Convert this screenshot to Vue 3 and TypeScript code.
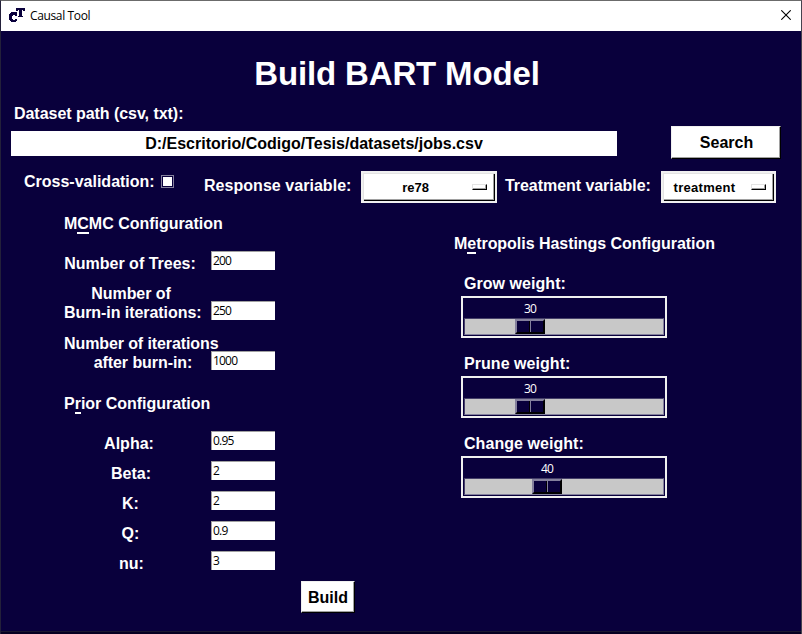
<script setup lang="ts">
import { reactive, ref } from 'vue'

interface Field { lines: string[]; value: string; width: number; height: number; cls: string }
interface Scale { label: string; value: number }

const path = ref('D:/Escritorio/Codigo/Tesis/datasets/jobs.csv')
const crossValidation = ref(false)

const mcmc = reactive<Field[]>([
  { lines: ['Number of Trees:'], value: '200', width: 132, height: 50, cls: 'single' },
  { lines: ['Number of', 'Burn-in iterations:'], value: '250', width: 137, height: 50, cls: 'center tight burn' },
  { lines: ['Number of iterations', 'after burn-in:'], value: '1000', width: 154, height: 50, cls: 'center tight last' },
])
const prior = reactive<Field[]>([
  { lines: ['Alpha:'], value: '0.95', width: 130, height: 30, cls: 'single' },
  { lines: ['Beta:'], value: '2', width: 134, height: 30, cls: 'single' },
  { lines: ['K:'], value: '2', width: 133, height: 30, cls: 'single' },
  { lines: ['Q:'], value: '0.9', width: 133, height: 30, cls: 'single' },
  { lines: ['nu:'], value: '3', width: 135, height: 30, cls: 'single' },
])
const scales = reactive<Scale[]>([
  { label: 'Grow weight:', value: 30 },
  { label: 'Prune weight:', value: 30 },
  { label: 'Change weight:', value: 40 },
])

// The slider is 30px wide and travels along the 168px left in the trough.
const offset = (value: number) => `${Math.round(value * 1.68)}px`
</script>

<template>
  <div class="window">
    <header class="titlebar">
      <svg class="logo" width="16" height="16" viewBox="0 0 16 16" shape-rendering="crispEdges">
        <path d="M2 5h6v4H6V8H4v1H3v3h1v1h2v-1h2v2H7v1H2v-1H1v-1H0V7h1V6h1z" fill="#09003c" />
        <path d="M7 1h9v3h-2V3h-1v6h1v1H9V9h1V3H9v1H7z" fill="#09003c" />
      </svg>
      <span class="caption">Causal Tool</span>
      <svg class="close" width="10" height="10" viewBox="0 0 10 10">
        <path d="M.3.3l9.4 9.4M9.7.3L.3 9.7" stroke="#000" stroke-width="1.1" />
      </svg>
    </header>

    <main class="content">
      <h1>Build BART Model</h1>
      <label class="path-label">Dataset path (csv, txt):</label>
      <div class="path-row">
        <input v-model="path" class="path" type="text" />
        <button class="raised search">Search</button>
      </div>

      <div class="options">
        <label class="cross">Cross-validation:</label>
        <button class="check" aria-label="Cross-validation" @click="crossValidation = !crossValidation"></button>
        <label class="response">Response variable:</label>
        <button class="menu menu-response"><span>re78</span><i></i></button>
        <label class="treatment">Treatment variable:</label>
        <button class="menu menu-treatment"><span>treatment</span><i></i></button>
      </div>

      <div class="columns">
        <section class="left">
          <h2>M<span class="mark">C</span>MC Configuration</h2>
          <div class="mcmc">
            <div v-for="f in mcmc" :key="f.lines[0]" class="field" :class="f.cls" :style="{ height: f.height + 'px' }">
              <div class="label-slot">
                <label :style="{ width: f.width + 'px' }"><span v-for="l in f.lines" :key="l">{{ l }}</span></label>
              </div>
              <input v-model="f.value" class="entry" type="text" />
            </div>
          </div>
          <h2 class="prior-title">P<span class="mark">r</span>ior Configuration</h2>
          <div class="prior">
            <div v-for="f in prior" :key="f.lines[0]" class="field single" :style="{ height: f.height + 'px' }">
              <div class="label-slot">
                <label :style="{ width: f.width + 'px' }"><span v-for="l in f.lines" :key="l">{{ l }}</span></label>
              </div>
              <input v-model="f.value" class="entry" type="text" />
            </div>
          </div>
          <button class="raised build">Build</button>
        </section>

        <section class="right">
          <h2>M<span class="mark">e</span>tropolis Hastings Configuration</h2>
          <div v-for="s in scales" :key="s.label" class="scale-group">
            <label>{{ s.label }}</label>
            <div class="scale">
              <div class="value" :style="{ marginLeft: offset(s.value) }">{{ s.value }}</div>
              <div class="trough">
                <div class="slider" :style="{ marginLeft: offset(s.value) }"><i></i><i></i></div>
              </div>
            </div>
          </div>
        </section>
      </div>
    </main>
    <footer class="edge"></footer>
  </div>
</template>

<style>
body { margin: 0; background: #09003c; }
</style>

<style scoped>
* { box-sizing: border-box; }
.window {
  width: 802px; height: 634px; display: flex; flex-direction: column; overflow: hidden;
  background: #09003c; color: #fff; border-top: 1px solid #6b6b6b;
  border-left: 1px solid #23203a; border-right: 1px solid #45434f;
  font: bold 16px/18px "Liberation Sans", Arial, sans-serif;
}
.titlebar { height: 30px; flex: none; display: flex; align-items: center; background: #fff; padding: 0 10px 0 8px; }
.logo { margin-bottom: 2px; }
.caption { margin-left: 5px; flex: 1; color: #000; font: 12px/16px "Open Sans", sans-serif; letter-spacing: -.36px; }
.close { margin-bottom: 2px; }
.content { flex: 1; min-height: 0; }
h1 { margin: 24px 0 0; height: 38px; font-size: 33px; line-height: 38px; letter-spacing: -.15px; text-align: center; padding-right: 8px; white-space: nowrap; }
label { display: block; white-space: nowrap; }
label span { display: block; line-height: 19px; }
input, button { font: inherit; border-radius: 0; appearance: none; display: block; flex: none; margin: 0; padding: 0; outline: none; }
.path-label { margin: 12px 0 0 13px; letter-spacing: -.04px; }
.path-row { display: flex; align-items: flex-start; margin-top: 3px; padding-left: 10px; }
.path { width: 606px; height: 25px; margin-top: 5px; border: 0; background: #fff; color: #000; text-align: center; }
.raised { background: #fff; color: #000; border: 1px solid; border-color: #f0f0f0 #000 #000 #f0f0f0; box-shadow: inset -1px -1px #a0a0a0; }
.search { width: 110px; height: 33px; margin-left: 54px; padding-left: 1px; }
.options { display: flex; align-items: flex-start; height: 44px; margin-top: 12px; padding-left: 23px; }
.cross { width: 137px; margin-top: 2px; }
.check { width: 13px; height: 13px; margin-top: 4px; background: #fff; border: 1px solid #84809d; box-shadow: inset 0 0 0 1px #09003c; }
.response { margin: 6px 0 0 30px; width: 157px; letter-spacing: .04px; }
.treatment { margin: 6px 0 0 8px; width: 156px; letter-spacing: -.05px; }
.menu {
  height: 32px; display: flex; align-items: center; background: #fff; color: #000;
  border: 2px solid #f0f0f0; font-size: 13px; line-height: 16px;
  box-shadow: inset 1px 1px #e3e3e3, inset -1px -1px #000, inset -2px -2px #a0a0a0;
}
.menu span { flex: 1; text-align: center; padding-top: 1px; }
.menu i { width: 15px; height: 6px; margin-right: 8px; border: 1px solid; border-color: #e3e3e3 #000 #000 #e3e3e3; box-shadow: inset -1px -1px #a0a0a0; }
.menu-response { width: 136px; }
.menu-treatment { width: 115px; }
.menu-response span { padding-right: 4px; }
.menu-treatment span { padding-right: 5px; letter-spacing: .3px; }
.columns { display: flex; align-items: flex-start; }
.left { width: 390px; padding-left: 63px; flex: none; }
.right { padding: 20px 0 0 63px; }
h2 { margin: 0; height: 22px; font-size: 16px; line-height: 18px; white-space: nowrap; letter-spacing: -.02px; }
.mark { display: inline-block; height: 19px; border-bottom: 2px solid #fff; vertical-align: top; }
.mcmc { margin-top: 14px; }
.field { display: flex; align-items: flex-start; }
.label-slot { width: 147px; flex: none; }
.label-slot label { text-align: center; }
.tight label { letter-spacing: -.06px; }
.burn label span:first-child { padding-right: 3px; }
.last label span:first-child { letter-spacing: -.1px; }
.last label span:last-child { padding-left: 4px; }
.single .label-slot { padding-top: 3px; }
.center .label-slot { margin-top: -17px; }
.entry {
  width: 64px; height: 19px; padding: 0 0 1px 1px; border: 0 solid #a0a0a0; border-width: 1px 0 0 1px;
  background: #fff; color: #000; font: 12px/16px "Open Sans", sans-serif; letter-spacing: -.8px;
}
.prior-title { margin-top: -6px; }
.prior { margin-top: 14px; }
.build { width: 54px; height: 32px; margin-left: 237px; padding-top: 1px; }
.scale-group { height: 80px; padding-left: 7px; }
.right h2 { margin-bottom: 18px; letter-spacing: -.04px; }
.right .scale-group label { padding-left: 3px; letter-spacing: .05px; }
.scale { width: 206px; height: 42px; margin-top: 3px; border: 2px solid #f0f0f0; padding: 0 1px; }
.value { width: 32px; height: 20px; font: 12px/22px "Open Sans", sans-serif; letter-spacing: -.8px; text-align: center; }
.trough { width: 200px; height: 17px; background: #c8c8c8; border: 1px solid; border-color: #453f69 #84809d #84809d #453f69; }
.slider { width: 30px; height: 15px; display: flex; background: #09003c; border: 2px solid; border-color: #84809d #000 #000 #84809d; }
.slider i { flex: 1; }
.slider i:first-child { border-right: 1px solid #000; }
.slider i:last-child { border-left: 1px solid #84809d; }
.edge { height: 3px; flex: none; background: #050022; border-top: 1px solid #1b1830; }
</style>
